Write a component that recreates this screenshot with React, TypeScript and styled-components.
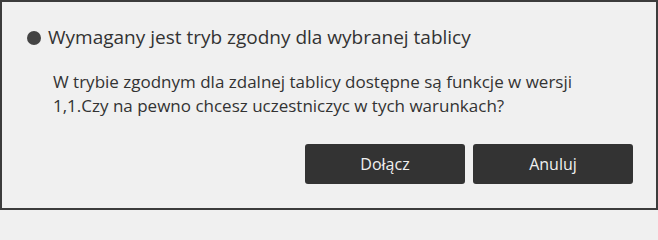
import React from "react";
import styled, { createGlobalStyle } from "styled-components";

const Global = createGlobalStyle`
  html, body { margin: 0; padding: 0; background: #f0f0f0; }
  * { box-sizing: border-box; }
`;

const Dialog = styled.div`
  width: 658px;
  height: 210px;
  background: #f0f0f0;
  border: 2px solid #3c3c3c;
  font-family: "Open Sans", "Noto Sans", sans-serif;
  color: #333333;
  display: flex;
  flex-direction: column;
  padding: 21px 23px 24px 25px;
`;

const Title = styled.div`
  display: flex;
  align-items: center;
  gap: 7px;
  font-size: 19px;
  line-height: 28px;
  color: #333333;
`;

const Bullet = styled.span`
  width: 14px;
  height: 14px;
  margin-top: 2px;
  border-radius: 50%;
  background: #444444;
  flex: none;
`;

const Message = styled.p`
  margin: 19px 0 0 26px;
  width: 545px;
  font-size: 17px;
  line-height: 24px;
  color: #333333;
`;

const Actions = styled.div`
  margin-top: auto;
  display: flex;
  justify-content: flex-end;
  gap: 8px;
`;

const Button = styled.button`
  width: 160px;
  height: 40px;
  border: none;
  border-radius: 3px;
  background: #333333;
  color: #f0f0f0;
  font-family: inherit;
  font-size: 16px;
  cursor: pointer;
`;

export default function App() {
  return (
    <>
      <Global />
      <Dialog>
        <Title>
          <Bullet />
          Wymagany jest tryb zgodny dla wybranej tablicy
        </Title>
        <Message>
          W trybie zgodnym dla zdalnej tablicy dostępne są funkcje w wersji 1,1.Czy na pewno chcesz uczestniczyc w tych warunkach?
        </Message>
        <Actions>
          <Button>Dołącz</Button>
          <Button>Anuluj</Button>
        </Actions>
      </Dialog>
    </>
  );
}
